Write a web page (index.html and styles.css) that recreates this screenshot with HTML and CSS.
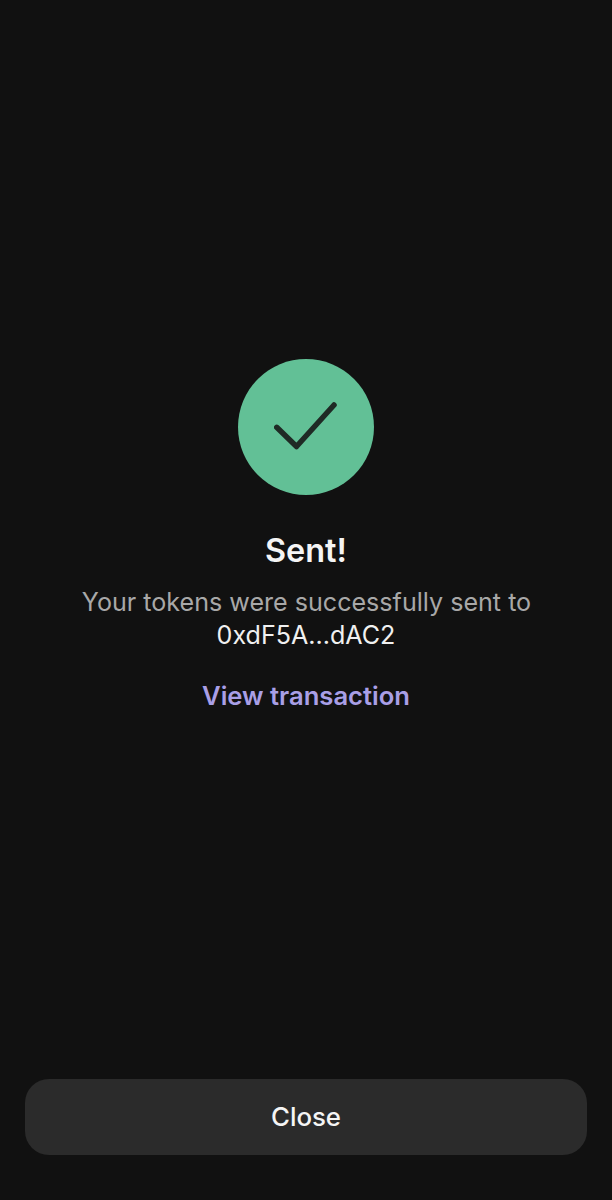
FILE: index.html
```html
<!DOCTYPE html>
<html lang="en">
<head>
    <meta charset="UTF-8">
    <meta name="viewport" content="width=device-width, initial-scale=1.0">
    <title>Sent</title>
    <link rel="stylesheet" href="styles.css">
</head>
<body>
    <main class="screen">
        <section class="result">
            <div class="check-circle">
                <svg width="64" height="50" viewBox="0 0 64 50" fill="none">
                    <path d="M2.7 25.3L22.5 44.5L60 3" stroke="#1f2a25" stroke-width="5.5" stroke-linecap="round" stroke-linejoin="round"/>
                </svg>
            </div>
            <h1 class="title">Sent!</h1>
            <p class="message">Your tokens were successfully sent to</p>
            <p class="address">0xdF5A...dAC2</p>
            <a class="link" href="#">View transaction</a>
        </section>
        <button class="close-btn" type="button">Close</button>
    </main>
</body>
</html>
```

FILE: styles.css
```css
html, body {
    margin: 0;
    padding: 0;
}
body {
    background-color: #111111;
    font-family: Inter, "Liberation Sans", sans-serif;
}
.screen {
    height: 1200px;
    box-sizing: border-box;
    padding: 359px 25px 45px;
    display: flex;
    flex-direction: column;
    justify-content: space-between;
}
.result {
    display: flex;
    flex-direction: column;
    align-items: center;
}
.check-circle {
    width: 136px;
    height: 136px;
    border-radius: 50%;
    background-color: #62c096;
    display: flex;
    align-items: center;
    justify-content: center;
}
.title {
    margin: 36px 0 0;
    font-size: 32.4px;
    line-height: 40px;
    font-weight: 600;
    color: #f5f5f5;
}
.message {
    margin: 15px 0 0;
    padding-left: 1px;
    font-size: 25.1px;
    line-height: 32px;
    color: #a8a8a8;
}
.address {
    margin: 0;
    font-size: 25.1px;
    line-height: 34px;
    color: #f0f0f0;
}
.link {
    margin-top: 27px;
    font-size: 25.6px;
    line-height: 34px;
    font-weight: 600;
    color: #a99fe6;
    text-decoration: none;
}
.close-btn {
    height: 76px;
    padding: 0 0 2px;
    border: none;
    border-radius: 24px;
    background-color: #2b2b2b;
    color: #f5f5f5;
    font-family: inherit;
    font-size: 25.8px;
    font-weight: 500;
    cursor: pointer;
}
```
